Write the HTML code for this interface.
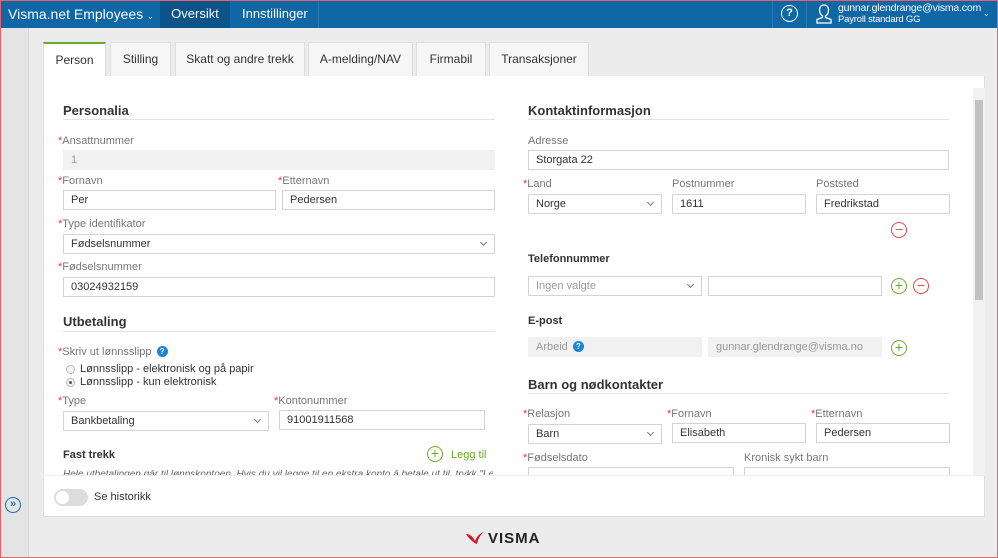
<!DOCTYPE html>
<html><head><meta charset="utf-8"><style>
*{box-sizing:border-box;margin:0;padding:0}
body{width:998px;height:558px;overflow:hidden;background:#ececec;font-family:"Liberation Sans",sans-serif;position:relative;}
.a{position:absolute}
.top{left:0;top:0;width:998px;height:28px;background:#0f67a6;color:#fff}
.lbl{font-size:11px;color:#777;position:absolute}
.lbl b{color:#e03a3a;font-weight:normal}
.in{position:absolute;height:20px;border:1px solid #d4d4d4;background:#fff;font-size:11px;color:#333;padding:3px 7px;line-height:13px}
.dis{background:#f1f1f1;border-color:#f1f1f1;color:#999}
.sel:after{content:"";position:absolute;right:8px;top:5px;width:4px;height:4px;border-right:1px solid #777;border-bottom:1px solid #777;transform:rotate(45deg)}
.h{position:absolute;font-size:13px;font-weight:bold;color:#333}
.hl{position:absolute;height:1px;background:#e3e3e3}
.sh{position:absolute;font-size:11px;font-weight:bold;color:#333}
.tab{position:absolute;top:42px;height:34px;background:#f6f6f6;border:1px solid #ddd;border-bottom:none;font-size:12px;color:#333;text-align:center;line-height:32px}
.c{position:absolute;width:16px;height:16px;border-radius:50%;border:1.5px solid #6aaa2a;color:#6aaa2a;font-size:14px;line-height:12px;text-align:center}
.m{border-color:#e04848;color:#e04848}
.q{display:inline-block;width:11px;height:11px;border-radius:50%;background:#1a84d6;color:#fff;font-size:8px;font-weight:bold;text-align:center;line-height:11px;vertical-align:1px;margin-left:5px}
</style></head><body>
<div class="a top">
 <div class="a" style="left:8px;top:6px;font-size:14px">Visma.net Employees <span style="font-size:8px">&#8964;</span></div>
 <div class="a" style="left:160px;top:0;width:70px;height:28px;background:#0b5489;font-size:13px;line-height:28px;text-align:center">Oversikt</div>
 <div class="a" style="left:242px;top:6px;font-size:13px">Innstillinger</div>
 <div class="a" style="left:318px;top:0;width:1px;height:28px;background:#2a7ab5"></div>
 <div class="a" style="left:772px;top:0;width:1px;height:28px;background:#2a7ab5"></div>
 <div class="a" style="left:806px;top:0;width:1px;height:28px;background:#2a7ab5"></div>
 <div class="a" style="left:781px;top:5px;width:17px;height:17px;border:1.5px solid #fff;border-radius:50%;font-size:11px;text-align:center;line-height:14px;font-weight:bold">?</div>
 <svg class="a" style="left:816px;top:4px" width="16" height="20" viewBox="0 0 16 20"><path d="M8 1c-3 0-4.5 2-4.5 5s1.5 5 3 6v1.5L1 15.5V19h14v-3.5L9.5 13.5V12c1.5-1 3-3 3-6S11 1 8 1z" fill="none" stroke="#fff" stroke-width="1.3"/></svg>
 <div class="a" style="left:838px;top:3px;font-size:10.5px;line-height:11px;letter-spacing:-0.2px">gunnar.glendrange@visma.com<br><span style="font-size:9.5px">Payroll standard GG</span></div>
 <div class="a" style="left:983px;top:9px;font-size:8px">&#8964;</div>
</div>
<div class="a" style="left:0;top:28px;width:29px;height:530px;background:#e4e4e4;border-right:1px solid #d8d8d8"></div>
<div class="a" style="left:5px;top:497px;width:16px;height:16px;border:1.5px solid #1a6fb8;border-radius:50%;color:#1a6fb8;font-size:11px;line-height:12px;text-align:center;font-weight:bold">»</div>

<div class="tab" style="left:43px;width:63px;background:#fff;border-top:2px solid #6aaa2a;height:35px">Person</div>
<div class="tab" style="left:110px;width:61px">Stilling</div>
<div class="tab" style="left:175px;width:130px">Skatt og andre trekk</div>
<div class="tab" style="left:308px;width:105px">A-melding/NAV</div>
<div class="tab" style="left:416px;width:70px">Firmabil</div>
<div class="tab" style="left:489px;width:100px">Transaksjoner</div>

<div class="a" style="left:43px;top:76px;width:942px;height:441px;background:#fff;border:1px solid #ddd;border-top:none"></div>
<div class="a" style="left:43px;top:475px;width:942px;height:1px;background:#eee"></div>
<div class="a" style="left:973px;top:88px;width:12px;height:387px;background:#f1f1f1"></div>
<div class="a" style="left:975px;top:100px;width:8px;height:200px;background:#c1c1c1"></div>

<div class="h" style="left:63px;top:103px">Personalia</div><div class="hl" style="left:63px;top:119px;width:432px"></div>
<div class="lbl" style="left:58px;top:135px"><b>*</b>Ansattnummer</div>
<div class="in dis" style="left:63px;top:150px;width:432px">1</div>
<div class="lbl" style="left:58px;top:175px"><b>*</b>Fornavn</div>
<div class="lbl" style="left:278px;top:175px"><b>*</b>Etternavn</div>
<div class="in" style="left:63px;top:190px;width:213px">Per</div>
<div class="in" style="left:282px;top:190px;width:213px">Pedersen</div>
<div class="lbl" style="left:58px;top:218px"><b>*</b>Type identifikator</div>
<div class="in sel" style="left:63px;top:234px;width:432px">Fødselsnummer</div>
<div class="lbl" style="left:58px;top:261px"><b>*</b>Fødselsnummer</div>
<div class="in" style="left:63px;top:277px;width:432px">03024932159</div>
<div class="h" style="left:63px;top:314px">Utbetaling</div><div class="hl" style="left:63px;top:331px;width:432px"></div>
<div class="lbl" style="left:58px;top:346px"><b>*</b>Skriv ut lønnsslipp<span class="q">?</span></div>
<div class="a" style="left:66px;top:365px;width:9px;height:9px;border:1px solid #bbb;border-radius:50%;background:#f4f4f4"></div>
<div class="a" style="left:80px;top:363px;font-size:11px;color:#333">Lønnsslipp - elektronisk og på papir</div>
<div class="a" style="left:66px;top:378px;width:9px;height:9px;border:1px solid #bbb;border-radius:50%;background:#f4f4f4"><div class="a" style="left:2px;top:2px;width:3px;height:3px;border-radius:50%;background:#555"></div></div>
<div class="a" style="left:80px;top:376px;font-size:11px;color:#333">Lønnsslipp - kun elektronisk</div>
<div class="lbl" style="left:58px;top:395px"><b>*</b>Type</div>
<div class="lbl" style="left:274px;top:395px"><b>*</b>Kontonummer</div>
<div class="in sel" style="left:63px;top:411px;width:206px">Bankbetaling</div>
<div class="in" style="left:279px;top:410px;width:206px">91001911568</div>
<div class="sh" style="left:63px;top:449px">Fast trekk</div>
<div class="c" style="left:427px;top:446px">+</div>
<div class="a" style="left:451px;top:449px;font-size:11px;color:#6aaa2a">Legg til</div>
<div class="a" style="left:63px;top:470px;width:430px;height:5px;overflow:hidden"><div style="font-size:10px;font-style:italic;color:#666;white-space:nowrap;margin-top:-1px">Hele utbetalingen går til lønnskontoen. Hvis du vil legge til en ekstra konto å betale ut til, trykk "Legg til"</div></div>

<div class="h" style="left:528px;top:103px">Kontaktinformasjon</div><div class="hl" style="left:528px;top:119px;width:421px"></div>
<div class="lbl" style="left:528px;top:135px">Adresse</div>
<div class="in" style="left:528px;top:150px;width:421px">Storgata 22</div>
<div class="lbl" style="left:523px;top:178px"><b>*</b>Land</div>
<div class="lbl" style="left:672px;top:178px">Postnummer</div>
<div class="lbl" style="left:816px;top:178px">Poststed</div>
<div class="in sel" style="left:528px;top:194px;width:134px">Norge</div>
<div class="in" style="left:672px;top:194px;width:134px">1611</div>
<div class="in" style="left:816px;top:194px;width:134px">Fredrikstad</div>
<div class="c m" style="left:891px;top:222px">−</div>
<div class="sh" style="left:528px;top:253px">Telefonnummer</div>
<div class="in sel" style="left:528px;top:276px;width:174px;color:#999">Ingen valgte</div>
<div class="in" style="left:708px;top:276px;width:174px"></div>
<div class="c" style="left:891px;top:278px">+</div>
<div class="c m" style="left:913px;top:278px">−</div>
<div class="sh" style="left:528px;top:315px">E-post</div>
<div class="in dis" style="left:528px;top:337px;width:174px">Arbeid<span class="q">?</span></div>
<div class="in dis" style="left:708px;top:337px;width:174px">gunnar.glendrange@visma.no</div>
<div class="c" style="left:891px;top:340px">+</div>
<div class="h" style="left:528px;top:377px">Barn og nødkontakter</div><div class="hl" style="left:528px;top:393px;width:421px"></div>
<div class="lbl" style="left:523px;top:408px"><b>*</b>Relasjon</div>
<div class="lbl" style="left:667px;top:408px"><b>*</b>Fornavn</div>
<div class="lbl" style="left:811px;top:408px"><b>*</b>Etternavn</div>
<div class="in sel" style="left:528px;top:424px;width:134px">Barn</div>
<div class="in" style="left:672px;top:423px;width:134px">Elisabeth</div>
<div class="in" style="left:816px;top:423px;width:134px">Pedersen</div>
<div class="lbl" style="left:523px;top:452px"><b>*</b>Fødselsdato</div>
<div class="lbl" style="left:744px;top:452px">Kronisk sykt barn</div>
<div class="a" style="left:528px;top:467px;width:206px;height:8px;border:1px solid #d4d4d4;border-bottom:none"></div>
<div class="a" style="left:744px;top:467px;width:206px;height:8px;border:1px solid #d4d4d4;border-bottom:none"></div>

<div class="a" style="left:54px;top:489px;width:34px;height:17px;border-radius:9px;background:#ddd"><div class="a" style="left:2px;top:2px;width:13px;height:13px;border-radius:50%;background:#fff"></div></div>
<div class="a" style="left:94px;top:491px;font-size:11px;color:#333">Se historikk</div>

<svg class="a" style="left:465px;top:531px" width="20" height="14" viewBox="0 0 20 14"><path d="M1 3c4 0 7 3 9 7 2-5 5-8 9-9-4 3-6 7-7 12-3-1-8-5-11-10z" fill="#d2152c"/></svg>
<div class="a" style="left:488px;top:530px;font-size:15px;font-weight:bold;color:#222;letter-spacing:1px">VISMA</div>
<div class="a" style="left:0;top:0;width:998px;height:558px;border:1px solid #e8606a;pointer-events:none"></div>
</body></html>
